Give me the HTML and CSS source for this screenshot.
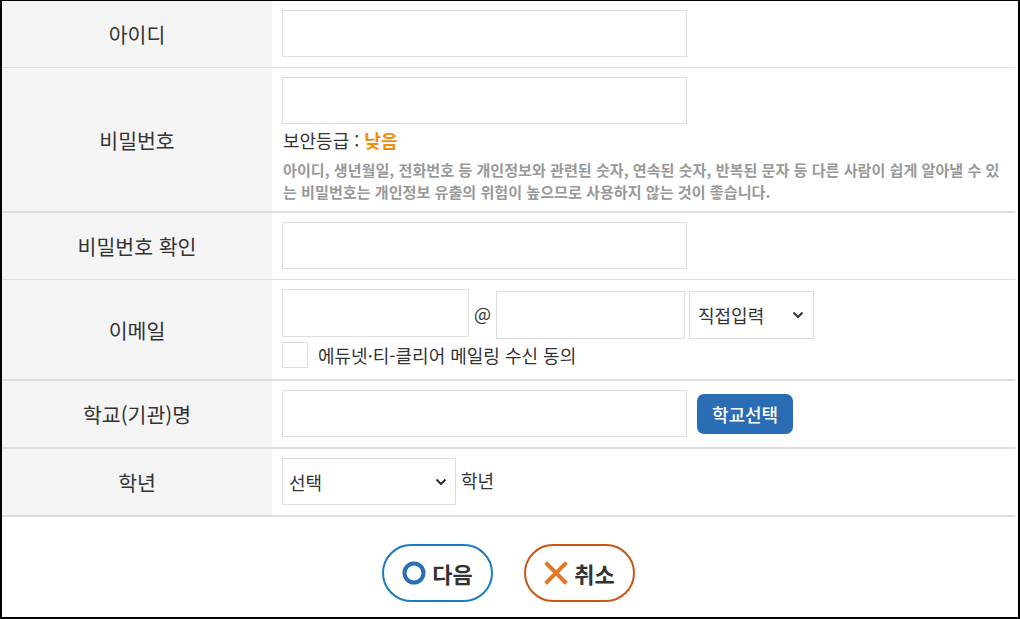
FILE: index.html
```html
<!DOCTYPE html>
<html lang="ko">
<head>
    <meta charset="UTF-8">
    <title>회원가입</title>
    <link rel="stylesheet" href="styles.css">
</head>
<body>
    <div class="join-form">
        <!-- 아이디 -->
        <div class="row">
            <div class="row-label">아이디</div>
            <div class="row-field">
                <input type="text" class="text-input wide">
            </div>
        </div>

        <!-- 비밀번호 -->
        <div class="row thick">
            <div class="row-label">비밀번호</div>
            <div class="row-field pw-field">
                <input type="password" class="text-input wide">
                <p class="pw-level">보안등급 : <span class="level-low">낮음</span></p>
                <p class="pw-help">아이디, 생년월일, 전화번호 등 개인정보와 관련된 숫자, 연속된 숫자, 반복된 문자 등 다른 사람이 쉽게 알아낼 수 있<br>는 비밀번호는 개인정보 유출의 위험이 높으므로 사용하지 않는 것이 좋습니다.</p>
            </div>
        </div>

        <!-- 비밀번호 확인 -->
        <div class="row">
            <div class="row-label">비밀번호 확인</div>
            <div class="row-field">
                <input type="password" class="text-input wide">
            </div>
        </div>

        <!-- 이메일 -->
        <div class="row thick">
            <div class="row-label">이메일</div>
            <div class="row-field email-field">
                <div class="email-line">
                    <input type="text" class="text-input email-id">
                    <span class="at">@</span>
                    <input type="text" class="text-input email-domain">
                    <div class="select-box domain-select">
                        <select>
                            <option>직접입력</option>
                        </select>
                        <svg class="chevron" viewBox="0 0 12 8" width="12" height="8"><path d="M1.5 1.5 L6 6 L10.5 1.5" fill="none" stroke="#333" stroke-width="2"/></svg>
                    </div>
                </div>
                <label class="agree">
                    <input type="checkbox" class="check">
                    <span>에듀넷·티-클리어 메일링 수신 동의</span>
                </label>
            </div>
        </div>

        <!-- 학교명 -->
        <div class="row thick">
            <div class="row-label">학교(기관)명</div>
            <div class="row-field inline">
                <input type="text" class="text-input wide">
                <button class="school-btn">학교선택</button>
            </div>
        </div>

        <!-- 학년 -->
        <div class="row thick">
            <div class="row-label">학년</div>
            <div class="row-field inline">
                <div class="select-box grade-select">
                    <select>
                        <option>선택</option>
                    </select>
                    <svg class="chevron" viewBox="0 0 12 8" width="12" height="8"><path d="M1.5 1.5 L6 6 L10.5 1.5" fill="none" stroke="#333" stroke-width="2"/></svg>
                </div>
                <span class="grade-unit">학년</span>
            </div>
        </div>

        <!-- 버튼 -->
        <div class="btn-area">
            <button class="round-btn btn-next">
                <svg viewBox="0 0 24 24" width="24" height="24"><circle cx="12" cy="12" r="9.5" fill="none" stroke="#2b6db6" stroke-width="4"/></svg>
                다음
            </button>
            <button class="round-btn btn-cancel">
                <svg viewBox="0 0 24 24" width="24" height="24"><path d="M3 3 L21 21 M21 3 L3 21" stroke="#e27627" stroke-width="4" stroke-linecap="square"/></svg>
                취소
            </button>
        </div>
    </div>
</body>
</html>
```

FILE: styles.css
```css
* {
    box-sizing: border-box;
}

html, body {
    margin: 0;
    height: 100%;
}

body {
    font-family: "Noto Sans CJK KR", "Noto Sans", sans-serif;
    color: #333;
    background: #fff;
    border-top: 1px solid #000;
    border-left: 2px solid #000;
    border-right: 2px solid #000;
    border-bottom: 2px solid #000;
}

.join-form {
    width: 1013px;
}

/* 행 */
.row {
    display: grid;
    grid-template-columns: 270px 1fr;
    border-bottom: 1px solid #ddd;
}

.row.thick {
    border-bottom: 2px solid #ddd;
}

.row-label {
    background: #f4f4f4;
    display: flex;
    align-items: center;
    justify-content: center;
    font-size: 20.5px;
}

.row-field {
    padding: 9px 10px 10px 10px;
}

.row-field.inline {
    display: flex;
    align-items: center;
}

/* 입력 */
.text-input {
    display: block;
    height: 47px;
    border: 1px solid #ddd;
    background: #fff;
    font-size: 18px;
    padding: 0 10px;
    font-family: inherit;
    outline: none;
}

.wide {
    width: 405px;
}

.pw-field {
    padding-bottom: 9px;
}

.pw-level {
    margin: 3px 0 0 1px;
    font-size: 18px;
    line-height: 26px;
}

.level-low {
    color: #f58a07;
    font-weight: bold;
}

.pw-help {
    margin: 5px 0 0 1px;
    font-size: 15.1px;
    line-height: 22px;
    font-weight: bold;
    color: #999;
    white-space: nowrap;
}

/* 이메일 */
.email-field {
    padding-bottom: 11px;
}

.email-line {
    display: flex;
    align-items: flex-start;
}

.email-id {
    width: 187px;
    height: 48px;
}

.at {
    font-size: 18px;
    width: 27px;
    text-align: center;
    line-height: 48px;
}

.email-domain {
    width: 189px;
    height: 48px;
    margin-top: 2px;
}

.select-box {
    position: relative;
}

.select-box select {
    appearance: none;
    -webkit-appearance: none;
    height: 48px;
    border: 1px solid #ddd;
    background: #fff;
    font-family: inherit;
    font-size: 18px;
    color: #333;
    padding: 0 8px;
    outline: none;
}

.chevron {
    position: absolute;
    right: 10px;
    top: 20px;
    pointer-events: none;
}

.domain-select {
    margin-left: 4px;
    margin-top: 2px;
}

.domain-select select {
    width: 125px;
}

.agree {
    display: flex;
    align-items: center;
    margin-top: 3px;
    font-size: 18px;
    height: 26px;
}

.check {
    appearance: none;
    -webkit-appearance: none;
    width: 26px;
    height: 26px;
    margin: 0 10px 0 0;
    border: 1px solid #ddd;
    background: #fff;
}

/* 학교 */
.school-btn {
    margin-left: 10px;
    width: 96px;
    height: 40px;
    border: none;
    border-radius: 7px;
    background: #2a6db4;
    color: #fff;
    font-family: inherit;
    font-size: 18px;
    font-weight: 500;
    padding: 0;
}

.grade-select select {
    width: 174px;
    height: 47px;
    padding-left: 6px;
}

.grade-select .chevron {
    right: 9px;
}

.grade-unit {
    font-size: 18px;
    margin-left: 5px;
    margin-top: -4px;
}

/* 버튼 영역 */
.btn-area {
    display: flex;
    justify-content: center;
    gap: 31px;
    padding-top: 27px;
}

.round-btn {
    display: flex;
    align-items: center;
    justify-content: center;
    gap: 6px;
    width: 111px;
    height: 58px;
    border-radius: 29px;
    background: #fff;
    font-family: inherit;
    font-size: 22px;
    font-weight: bold;
    color: #333;
    padding: 0;
}

.btn-next {
    border: 2px solid #1c7cc0;
}

.btn-cancel {
    border: 2px solid #c85717;
}
```
